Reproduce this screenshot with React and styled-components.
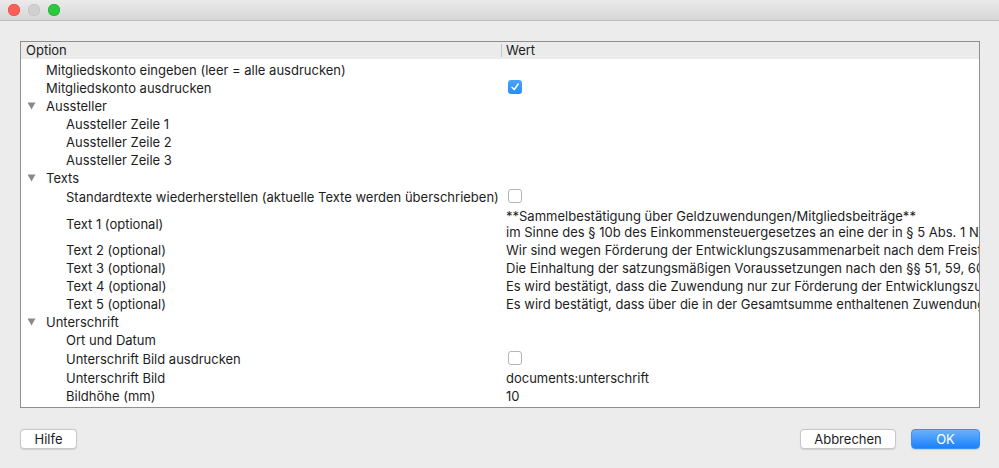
import React from 'react';
import styled, { createGlobalStyle } from 'styled-components';

const GlobalStyle = createGlobalStyle`
  html, body {
    margin: 0;
    padding: 0;
    background: #ececec;
  }
  body {
    font-family: Inter, "Noto Sans", "Liberation Sans", sans-serif;
    font-size: 13px;
    color: #1d1d1d;
    -webkit-font-smoothing: antialiased;
  }
`;

const Window = styled.div`
  width: 999px;
  height: 468px;
  display: flex;
  flex-direction: column;
  background: #ececec;
  overflow: hidden;
`;

const TitleBar = styled.div`
  height: 20px;
  flex: none;
  display: flex;
  align-items: center;
  gap: 8px;
  padding-left: 8px;
  background: linear-gradient(#ebebeb, #d6d6d6);
  border-bottom: 1px solid #bcbcbc;
`;

const Light = styled.span`
  width: 12px;
  height: 12px;
  border-radius: 50%;
  background: ${p => p.color};
  box-shadow: inset 0 0 0 0.5px ${p => p.edge};
`;

const Body = styled.div`
  flex: 1;
  display: flex;
  flex-direction: column;
  padding: 20px 19px 0 20px;
`;

const Frame = styled.div`
  height: 367px;
  box-sizing: border-box;
  border: 1px solid #8f8f8f;
  background: #fff;
  overflow: hidden;
`;

const Header = styled.div`
  display: grid;
  grid-template-columns: 480px 1fr;
  height: 17px;
  background: #ebebeb;
  line-height: 17px;
  margin-bottom: 1px;
`;

const HeaderCell = styled.div`
  padding-left: ${p => (p.divided ? '4px' : '5px')};
  border-left: ${p => (p.divided ? '1px solid #c6c6c6' : 'none')};
  margin: ${p => (p.divided ? '2px 0' : '0')};
  line-height: ${p => (p.divided ? '13px' : '17px')};
`;

const Row = styled.div`
  display: grid;
  grid-template-columns: 480px 1fr;
  align-items: center;
  min-height: ${p => p.h || 18}px;
`;

const Label = styled.div`
  display: flex;
  align-items: center;
  padding-left: ${p => (p.level === 1 ? 45 : 25)}px;
  padding-top: 2px;
  line-height: 16px;
  white-space: nowrap;
  position: relative;
`;

const Toggle = styled.svg`
  position: absolute;
  left: 6px;
  top: 50%;
  margin-top: -3px;
`;

const Value = styled.div`
  padding-left: 5px;
  padding-top: ${p => (p.box ? 0 : 2)}px;
  white-space: nowrap;
  overflow: hidden;
  line-height: 16px;
`;

const Box = styled.span`
  display: flex;
  align-items: center;
  justify-content: center;
  width: 14px;
  height: 14px;
  margin-left: 2px;
  box-sizing: border-box;
  border-radius: 3px;
  background: ${p => (p.checked ? 'linear-gradient(#4aa3fd, #2a8cf8)' : '#fff')};
  border: ${p => (p.checked ? 'none' : '1px solid #b4b4b4')};
`;

const Footer = styled.div`
  display: flex;
  align-items: center;
  padding-top: 21px;
`;

const Button = styled.button`
  height: 20px;
  width: ${p => p.w}px;
  box-sizing: border-box;
  font-family: inherit;
  font-size: 13px;
  padding: 0;
  border-radius: 4px;
  margin-left: ${p => p.gap || 0}px;
  color: ${p => (p.primary ? '#fff' : '#1d1d1d')};
  background: ${p => (p.primary ? 'linear-gradient(#6ab1fb, #1b81fb)' : '#fff')};
  border: ${p => (p.primary ? '1px solid #3b8ff5' : '1px solid #c8c8c8')};
  box-shadow: 0 0.5px 1px rgba(0, 0, 0, 0.12);
`;

const Spacer = styled.div`
  flex: 1;
`;

const Check = () => (
  <svg width="10" height="10" viewBox="0 0 10 10">
    <path d="M2 5.2 L4.2 7.6 L8.2 2" fill="none" stroke="#fff" strokeWidth="1.5" strokeLinecap="round" strokeLinejoin="round" />
  </svg>
);

const Triangle = () => (
  <Toggle width="9" height="8" viewBox="0 0 9 8">
    <path d="M0.5 0.5 L8.5 0.5 L4.5 7.5 Z" fill="#8a8a8a" />
  </Toggle>
);

const rows = [
  { label: 'Mitgliedskonto eingeben (leer = alle ausdrucken)' },
  { label: 'Mitgliedskonto ausdrucken', box: true, checked: true, h: 18 },
  { label: 'Aussteller', group: true },
  { label: 'Aussteller Zeile 1', level: 1 },
  { label: 'Aussteller Zeile 2', level: 1 },
  { label: 'Aussteller Zeile 3', level: 1 },
  { label: 'Texts', group: true },
  { label: 'Standardtexte wiederherstellen (aktuelle Texte werden überschrieben)', level: 1, box: true, h: 20 },
  {
    label: 'Text 1 (optional)',
    level: 1,
    h: 34,
    value: [
      '**Sammelbestätigung über Geldzuwendungen/Mitgliedsbeiträge**',
      'im Sinne des § 10b des Einkommensteuergesetzes an eine der in § 5 Abs. 1 Nr. 9 des Körperschaftsteuergesetzes bezeichneten Körperschaften',
    ],
  },
  { label: 'Text 2 (optional)', level: 1, value: ['Wir sind wegen Förderung der Entwicklungszusammenarbeit nach dem Freistellungsbescheid des Finanzamtes'] },
  { label: 'Text 3 (optional)', level: 1, value: ['Die Einhaltung der satzungsmäßigen Voraussetzungen nach den §§ 51, 59, 60 und 61 AO wurde vom Finanzamt'] },
  { label: 'Text 4 (optional)', level: 1, value: ['Es wird bestätigt, dass die Zuwendung nur zur Förderung der Entwicklungszusammenarbeit verwendet wird.'] },
  { label: 'Text 5 (optional)', level: 1, value: ['Es wird bestätigt, dass über die in der Gesamtsumme enthaltenen Zuwendungen keine weiteren Bestätigungen'] },
  { label: 'Unterschrift', group: true },
  { label: 'Ort und Datum', level: 1 },
  { label: 'Unterschrift Bild ausdrucken', level: 1, box: true, h: 20 },
  { label: 'Unterschrift Bild', level: 1, value: ['documents:unterschrift'] },
  { label: 'Bildhöhe (mm)', level: 1, value: ['10'] },
];

export default function App() {
  return (
    <Window>
      <GlobalStyle />
      <TitleBar>
        <Light color="#fc5f57" edge="#e0443e" />
        <Light color="#d1d0d1" edge="#bcbcbc" />
        <Light color="#2bc840" edge="#1aab29" />
      </TitleBar>
      <Body>
        <Frame>
          <Header>
            <HeaderCell>Option</HeaderCell>
            <HeaderCell divided>Wert</HeaderCell>
          </Header>
          {rows.map((r, i) => (
            <Row key={i} h={r.h}>
              <Label level={r.level}>
                {r.group && <Triangle />}
                {r.label}
              </Label>
              <Value box={r.box}>
                {r.box ? (
                  <Box checked={r.checked}>{r.checked && <Check />}</Box>
                ) : (
                  r.value && r.value.map((line, j) => <div key={j}>{line}</div>)
                )}
              </Value>
            </Row>
          ))}
        </Frame>
        <Footer>
          <Button w={57}>Hilfe</Button>
          <Spacer />
          <Button w={96}>Abbrechen</Button>
          <Button w={69} gap={15} primary>OK</Button>
        </Footer>
      </Body>
    </Window>
  );
}
